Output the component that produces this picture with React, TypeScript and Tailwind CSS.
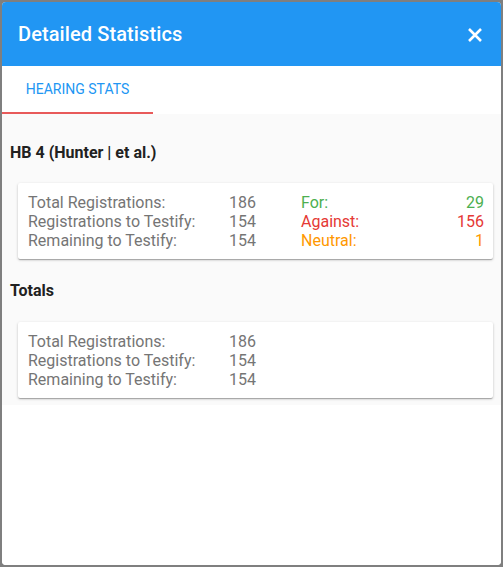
import React from "react";

function Row({ label, value }: { label: string; value: string }) {
  return (
    <div className="flex h-[19px] items-center">
      <span className="w-[201px]">{label}</span>
      <span>{value}</span>
    </div>
  );
}

function SideRow({ label, value, color }: { label: string; value: string; color: string }) {
  return (
    <div className={`flex h-[19px] items-center justify-between ${color}`}>
      <span>{label}</span>
      <span>{value}</span>
    </div>
  );
}

export default function App() {
  return (
    <div
      className="w-[503px] h-[567px] bg-[#7f7f7f] p-[2px]"
      style={{ fontFamily: "Roboto, 'Liberation Sans', sans-serif" }}
    >
      <div className="flex h-full flex-col overflow-hidden rounded-[4px] bg-white">
        <div className="flex h-[64px] shrink-0 items-center justify-between bg-[#2196f3] pl-[16px] pr-[18px] text-white">
          <span className="text-[20px] font-medium tracking-[0.1px]">Detailed Statistics</span>
          <svg width="16" height="16" viewBox="0 0 16 16" className="mt-[1px]">
            <path d="M2 2 L14 14 M14 2 L2 14" stroke="white" strokeWidth="2.6" strokeLinecap="butt" />
          </svg>
        </div>
        <div className="flex h-[48px] shrink-0 bg-white">
          <div className="relative flex w-[151px] items-center justify-center text-[14px] text-[#2196f3]">
            <span className="mb-[1px]">HEARING STATS</span>
            <div className="absolute bottom-0 left-0 h-[2px] w-full bg-[#e85a5a]" />
          </div>
        </div>
        <div className="bg-[#fafafa] px-[8px] pb-[7px] pt-[27px] text-[#212121]">
          <div className="h-[24px] leading-[24px] text-[16px] font-bold">HB 4 (Hunter | et al.)</div>
          <div className="ml-[8px] mt-[18px] flex rounded-[2px] bg-white pl-[10px] pr-[9px] pt-[10px] pb-[9px] text-[16px] text-[#757575] shadow-[0_1px_3px_rgba(0,0,0,0.2),0_1px_1px_rgba(0,0,0,0.14),0_2px_1px_-1px_rgba(0,0,0,0.12)]">
            <div className="w-[273px]">
              <Row label="Total Registrations:" value="186" />
              <Row label="Registrations to Testify:" value="154" />
              <Row label="Remaining to Testify:" value="154" />
            </div>
            <div className="flex-1">
              <SideRow label="For:" value="29" color="text-[#4caf50]" />
              <SideRow label="Against:" value="156" color="text-[#e53935]" />
              <SideRow label="Neutral:" value="1" color="text-[#ff9800]" />
            </div>
          </div>
          <div className="mt-[20px] h-[24px] leading-[24px] text-[16px] font-bold">Totals</div>
          <div className="ml-[8px] mt-[19px] rounded-[2px] bg-white pl-[10px] pr-[9px] pt-[10px] pb-[9px] text-[16px] text-[#757575] shadow-[0_1px_3px_rgba(0,0,0,0.2),0_1px_1px_rgba(0,0,0,0.14),0_2px_1px_-1px_rgba(0,0,0,0.12)]">
            <Row label="Total Registrations:" value="186" />
            <Row label="Registrations to Testify:" value="154" />
            <Row label="Remaining to Testify:" value="154" />
          </div>
        </div>
        <div className="flex-1 bg-white" />
      </div>
    </div>
  );
}
